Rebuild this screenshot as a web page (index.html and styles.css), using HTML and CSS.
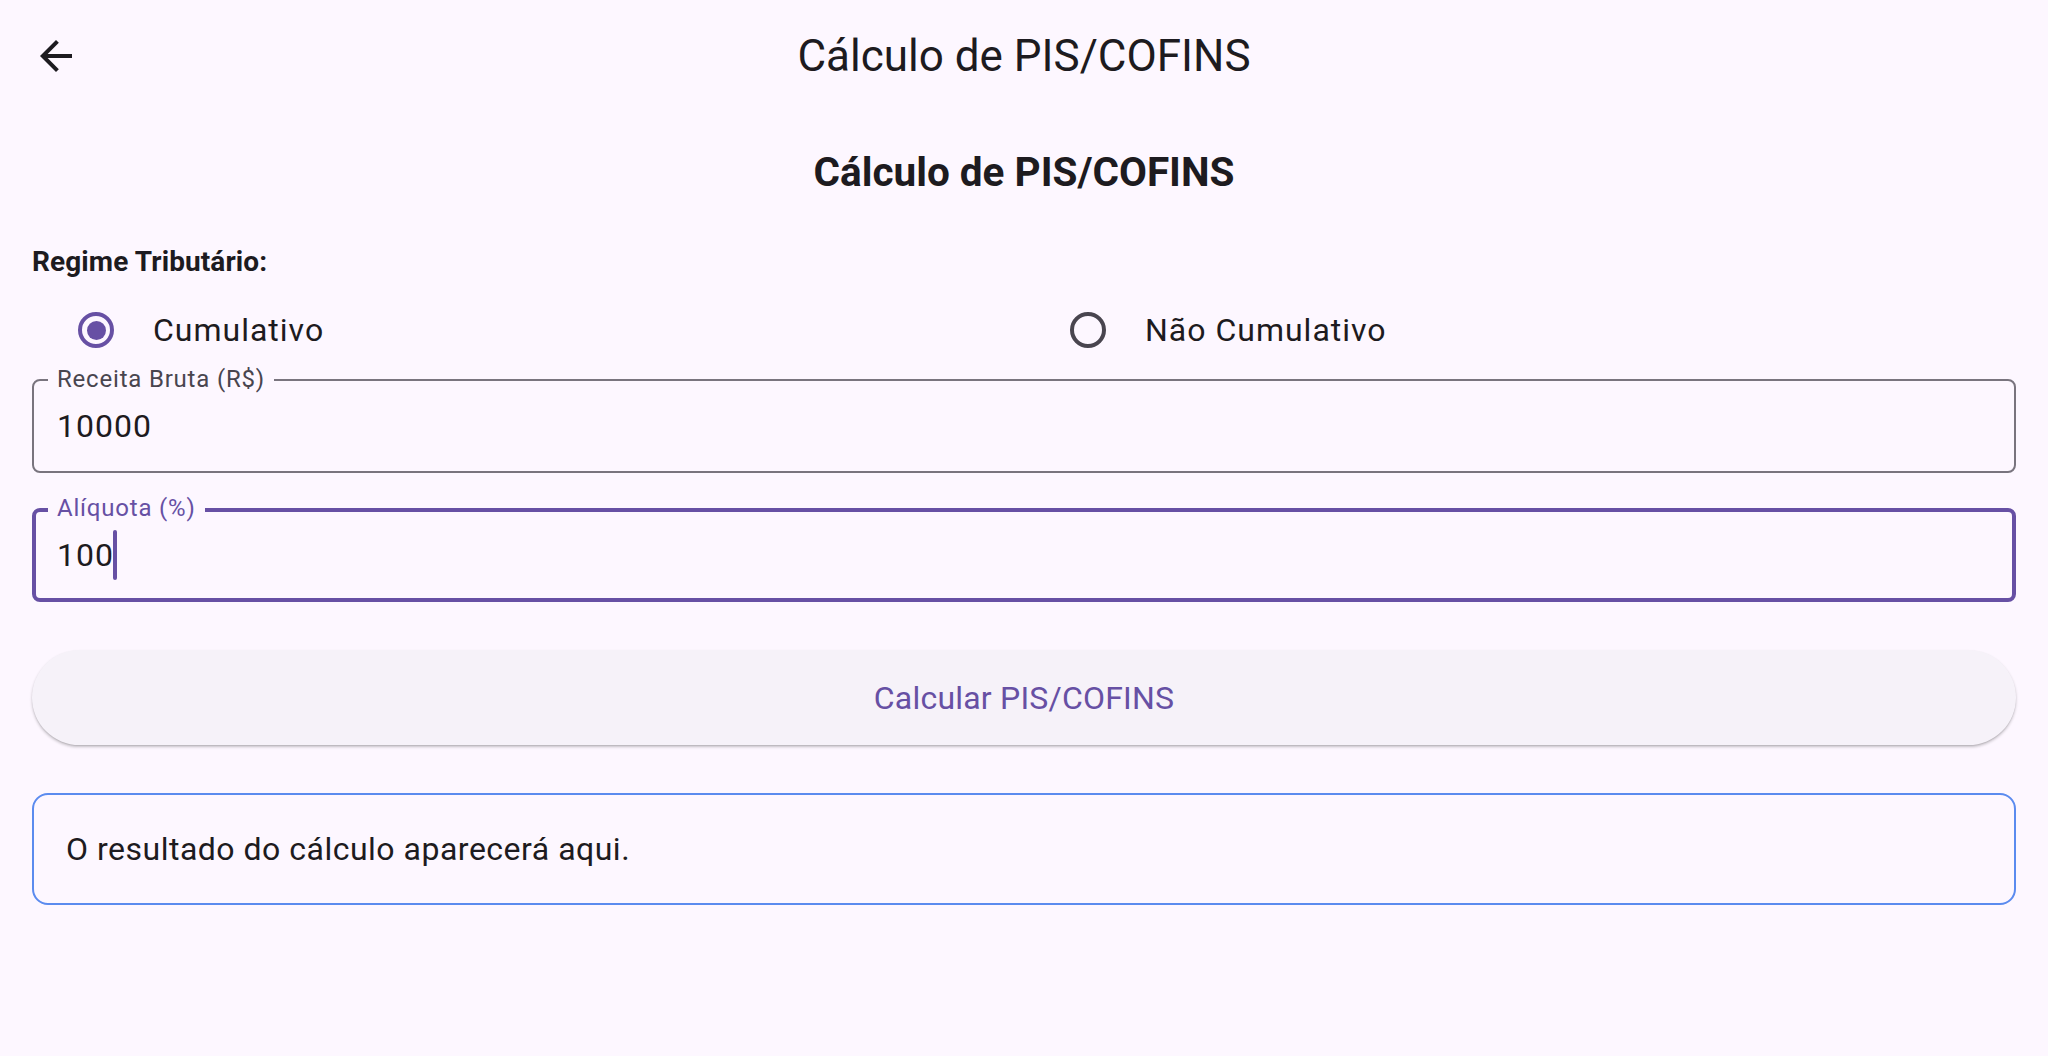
FILE: index.html
```html
<!DOCTYPE html>
<html lang="pt">
<head>
<meta charset="utf-8">
<title>Cálculo de PIS/COFINS</title>
<link rel="stylesheet" href="styles.css">
</head>
<body>
<header class="appbar">
  <button class="back" aria-label="Voltar">
    <svg viewBox="0 0 24 24" width="48" height="48"><path d="M20 11H7.83l5.59-5.59L12 4l-8 8 8 8 1.41-1.41L7.83 13H20v-2z" fill="#1D1B20"/></svg>
  </button>
  <div class="appbar-title">Cálculo de PIS/COFINS</div>
  <div class="appbar-spacer"></div>
</header>
<main class="content">
  <h1 class="heading">Cálculo de PIS/COFINS</h1>
  <div class="section-label">Regime Tributário:</div>
  <div class="radio-row">
    <label class="radio-tile">
      <span class="radio selected"><span class="dot"></span></span>
      <span class="radio-text">Cumulativo</span>
    </label>
    <label class="radio-tile">
      <span class="radio"></span>
      <span class="radio-text">Não Cumulativo</span>
    </label>
  </div>
  <div class="field">
    <span class="field-label">Receita Bruta (R$)</span>
    <div class="field-value">10000</div>
  </div>
  <div class="field focused">
    <span class="field-label">Alíquota (%)</span>
    <div class="field-value">100<span class="cursor"></span></div>
  </div>
  <button class="calc-btn">Calcular PIS/COFINS</button>
  <div class="result">O resultado do cálculo aparecerá aqui.</div>
</main>
</body>
</html>
```

FILE: styles.css
```css
* { box-sizing: border-box; }
html, body {
  margin: 0;
  padding: 0;
  background: #FDF7FF;
  color: #1D1B20;
  font-family: Roboto, "Noto Sans", "Liberation Sans", sans-serif;
}
.appbar {
  height: 112px;
  display: grid;
  grid-template-columns: 112px 1fr 112px;
  align-items: center;
}
.back {
  width: 112px;
  height: 112px;
  border: none;
  background: transparent;
  padding: 0;
  display: flex;
  align-items: center;
  justify-content: center;
}
.appbar-title {
  text-align: center;
  font-size: 44px;
  font-weight: 400;
  line-height: 56px;
}
.content {
  padding: 32px 32px 0;
}
.heading {
  margin: 0;
  text-align: center;
  font-size: 40.5px;
  font-weight: 700;
  line-height: 56px;
}
.section-label {
  margin-top: 42px;
  font-size: 28px;
  font-weight: 700;
  line-height: 40px;
  letter-spacing: 0.1px;
}
.radio-row {
  margin-top: 8px;
  display: grid;
  grid-template-columns: 1fr 1fr;
  height: 80px;
}
.radio-tile {
  display: flex;
  align-items: center;
  padding-left: 46px;
}
.radio {
  width: 36px;
  height: 36px;
  border: 4px solid #49454F;
  border-radius: 50%;
  display: flex;
  align-items: center;
  justify-content: center;
  flex: none;
}
.radio.selected { border-color: #6750A4; }
.dot {
  width: 19px;
  height: 19px;
  border-radius: 50%;
  background: #6750A4;
}
.radio-text {
  margin-left: 39px;
  font-size: 32px;
  letter-spacing: 1px;
  line-height: 48px;
}
.field {
  position: relative;
  margin-top: 9px;
  height: 94px;
  border: 2px solid #79747E;
  border-radius: 8px;
  display: flex;
  align-items: center;
  padding-left: 23px;
}
.field + .field { margin-top: 35px; }
.field.focused {
  border: 4px solid #6750A4;
  padding-left: 21px;
}
.field-label {
  position: absolute;
  left: 14px;
  top: -17px;
  padding: 0 9px;
  background: #FDF7FF;
  font-size: 24px;
  line-height: 30px;
  letter-spacing: 0.8px;
  color: #49454F;
}
.field.focused .field-label {
  left: 12px;
  top: -19px;
  color: #6750A4;
}
.field-value {
  font-size: 32px;
  letter-spacing: 1px;
  line-height: 48px;
  display: flex;
  align-items: center;
  margin-top: -1px;
}
.cursor {
  display: inline-block;
  width: 4px;
  height: 50px;
  background: #6750A4;
  border-radius: 2px;
  margin-left: -1px;
}
.calc-btn {
  display: block;
  width: 100%;
  margin-top: 48px;
  height: 95px;
  border: none;
  border-radius: 48px;
  background: #F6F2F9;
  box-shadow: 0 2px 3px rgba(0,0,0,0.22), 0 1px 1px rgba(0,0,0,0.08);
  color: #6750A4;
  font-family: Roboto, "Noto Sans", "Liberation Sans", sans-serif;
  font-size: 32px;
  font-weight: 400;
  letter-spacing: 0.2px;
}
.result {
  margin-top: 48px;
  height: 112px;
  border: 2px solid #5B8BEF;
  border-radius: 16px;
  display: flex;
  align-items: center;
  padding-left: 32px;
  font-size: 32px;
  letter-spacing: 0.5px;
}
```
